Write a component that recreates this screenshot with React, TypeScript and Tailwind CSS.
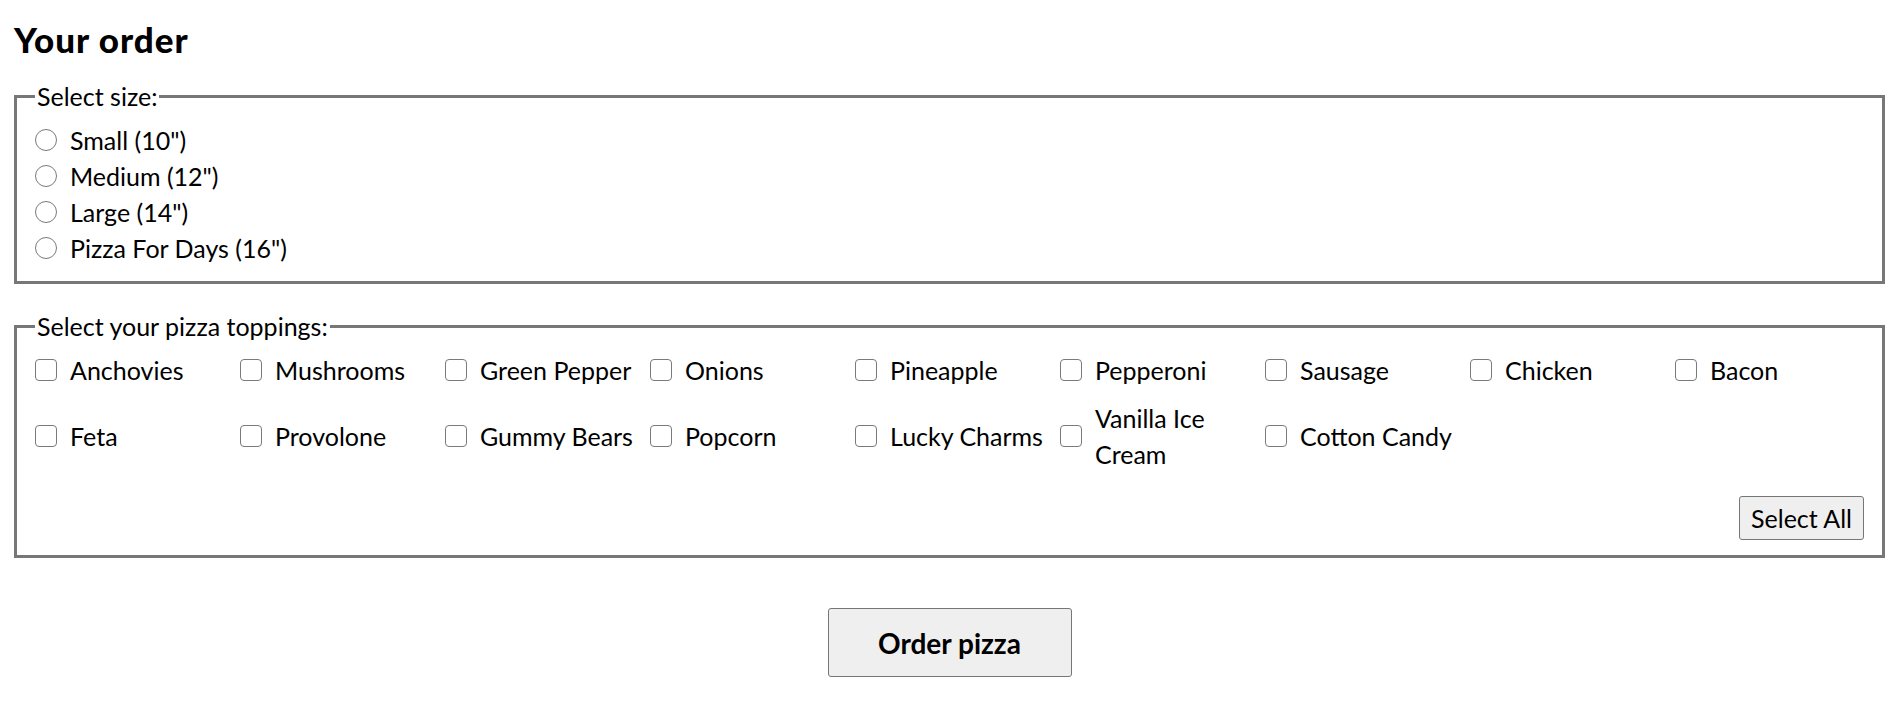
import React from "react";

const sizes = ['Small (10")', 'Medium (12")', 'Large (14")', 'Pizza For Days (16")'];
const toppings = [
  "Anchovies",
  "Mushrooms",
  "Green Pepper",
  "Onions",
  "Pineapple",
  "Pepperoni",
  "Sausage",
  "Chicken",
  "Bacon",
  "Feta",
  "Provolone",
  "Gummy Bears",
  "Popcorn",
  "Lucky Charms",
  "Vanilla Ice Cream",
  "Cotton Candy",
];

export default function App() {
  return (
    <div
      className="min-h-[726px] bg-white text-black px-[14px] text-[25px] leading-[36px]"
      style={{ fontFamily: "Lato, 'Noto Sans', sans-serif" }}
    >
      <h1 className="text-[35px] leading-[48px] font-black tracking-[1px] pt-[15px] mb-[15px]">Your order</h1>

      <fieldset className="border-[3px] border-[#777777] px-[18px] pt-[8px] pb-[15px] m-0">
        <legend className="px-[2px]">Select size:</legend>
        <div className="flex flex-col">
          {sizes.map((s) => (
            <label key={s} className="flex items-center gap-[13px] h-[36px]">
              <input
                type="radio"
                name="size"
                className="m-0 w-[22px] h-[22px] shrink-0 appearance-none rounded-full border-[1.5px] border-[#7a7a7a] bg-white"
              />
              <span>{s}</span>
            </label>
          ))}
        </div>
      </fieldset>

      <fieldset className="border-[3px] border-[#777777] px-[18px] pt-[8px] pb-[15px] mt-[24px]">
        <legend className="px-[2px]">Select your pizza toppings:</legend>
        <div className="grid grid-cols-9 gap-x-4 gap-y-3">
          {toppings.map((t) => (
            <label key={t} className="flex items-center gap-[13px] min-h-[36px]">
              <input
                type="checkbox"
                className="m-0 w-[22px] h-[22px] shrink-0 appearance-none rounded-[4px] border-[1.5px] border-[#7a7a7a] bg-white"
              />
              <span className={t === "Vanilla Ice Cream" ? "" : "whitespace-nowrap"}>{t}</span>
            </label>
          ))}
        </div>
        <div className="flex justify-end mt-[24px]">
          <button className="h-[44px] px-[11px] bg-[#efefef] border border-[#767676] rounded-[3px] text-[25px]">
            Select All
          </button>
        </div>
      </fieldset>

      <div className="flex justify-center mt-[50px]">
        <button className="w-[244px] h-[69px] bg-[#efefef] border border-[#767676] rounded-[3px] text-[28px] font-bold">
          Order pizza
        </button>
      </div>
    </div>
  );
}
